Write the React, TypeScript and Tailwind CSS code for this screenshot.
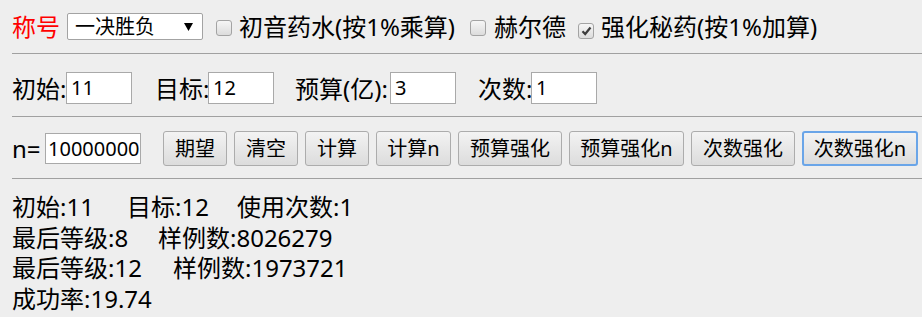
import React from "react";

const font = { fontFamily: '"Noto Sans", "Noto Sans CJK SC", sans-serif' };

function Check({ checked = false }: { checked?: boolean }) {
  return (
    <span className="inline-flex w-[16px] h-[16px] shrink-0 items-center justify-center rounded-[3px] border border-[#a3a3a3] bg-gradient-to-b from-[#f6f6f6] to-[#dcdcdc]">
      {checked && (
        <svg width="11" height="10" viewBox="0 0 11 10">
          <path d="M1.5 5.2 L4.2 8 L9.5 1.5" fill="none" stroke="#3c3c3c" strokeWidth="2.2" />
        </svg>
      )}
    </span>
  );
}

function Field({ value, w }: { value: string; w: string }) {
  return (
    <div
      className={`${w} h-[32px] shrink-0 bg-white border border-[#a9a9a9] pl-[4px] text-[20px] leading-[30px] text-black`}
    >
      {value}
    </div>
  );
}

function Btn({ label, w, focus = false }: { label: string; w: string; focus?: boolean }) {
  return (
    <div
      className={`${w} h-[35px] shrink-0 flex items-center justify-center rounded-[3px] text-[20px] text-black bg-gradient-to-b from-[#f3f3f3] to-[#dcdcdc] ${
        focus ? "border-2 border-[#6aa5e8]" : "border border-[#acacac]"
      }`}
    >
      {label}
    </div>
  );
}

function Rule() {
  return <div className="h-px bg-[#a0a0a0] mr-[-12px]" />;
}

export default function App() {
  return (
    <div className="min-h-screen w-full bg-[#eeeeee] px-[12px] pt-[12px] text-[24px] text-black overflow-hidden" style={font}>
      {/* title row */}
      <div className="h-[29px] flex items-center whitespace-nowrap leading-[31px]">
        <span className="text-[#ff0000] w-[55px] shrink-0">称号</span>
        <div className="w-[136px] h-[27px] shrink-0 bg-white border border-[#a3a3a3] rounded-[2px] flex items-center pl-[7px] pr-[9px] text-[20px]">
          <span className="flex-1">一决胜负</span>
          <svg width="9" height="8" viewBox="0 0 9 8">
            <path d="M0 0 H9 L4.5 8 Z" fill="#000" />
          </svg>
        </div>
        <span className="ml-[13px]"><Check /></span>
        <span className="ml-[7px]">初音药水(按1%乘算)</span>
        <span className="ml-[15px]"><Check /></span>
        <span className="ml-[8px]">赫尔德</span>
        <span className="ml-[12px]"><Check checked /></span>
        <span className="ml-[7px]">强化秘药(按1%加算)</span>
      </div>
      <div className="mt-[12px]"><Rule /></div>

      {/* inputs */}
      <div className="mt-[18px] h-[32px] flex items-center whitespace-nowrap leading-[31px]">
        <span className="w-[54px] shrink-0">初始:</span>
        <Field value="11" w="w-[66px]" />
        <span className="w-[53px] ml-[23px] shrink-0">目标:</span>
        <Field value="12" w="w-[66px]" />
        <span className="w-[95px] ml-[21px] shrink-0">预算(亿):</span>
        <Field value="3" w="w-[66px]" />
        <span className="w-[53px] ml-[22px] shrink-0">次数:</span>
        <Field value="1" w="w-[66px]" />
      </div>
      <div className="mt-[12px]"><Rule /></div>

      {/* buttons */}
      <div className="mt-[14px] h-[35px] flex items-center whitespace-nowrap leading-[31px]">
        <span className="w-[33px] shrink-0">n=</span>
        <div className="w-[96px] h-[31px] shrink-0 bg-white border border-[#a9a9a9] pl-[2px] text-[20px] leading-[29px]">10000000</div>
        <div className="ml-[22px] flex gap-[7px] shrink-0">
          <Btn label="期望" w="w-[64px]" />
          <Btn label="清空" w="w-[64px]" />
          <Btn label="计算" w="w-[64px]" />
          <Btn label="计算n" w="w-[75px]" />
          <Btn label="预算强化" w="w-[104px]" />
          <Btn label="预算强化n" w="w-[115px]" />
          <Btn label="次数强化" w="w-[104px]" />
          <Btn label="次数强化n" w="w-[116px]" focus />
        </div>
      </div>
      <div className="mt-[12px]"><Rule /></div>

      {/* results */}
      <div className="mt-[13px] leading-[30.5px] whitespace-nowrap">
        <div>
          <span className="inline-block w-[115px]">初始:11</span>
          <span className="inline-block w-[110px]">目标:12</span>
          <span>使用次数:1</span>
        </div>
        <div>
          <span className="inline-block w-[146px]">最后等级:8</span>
          <span>样例数:8026279</span>
        </div>
        <div>
          <span className="inline-block w-[161px]">最后等级:12</span>
          <span>样例数:1973721</span>
        </div>
        <div>成功率:19.74</div>
      </div>
    </div>
  );
}
